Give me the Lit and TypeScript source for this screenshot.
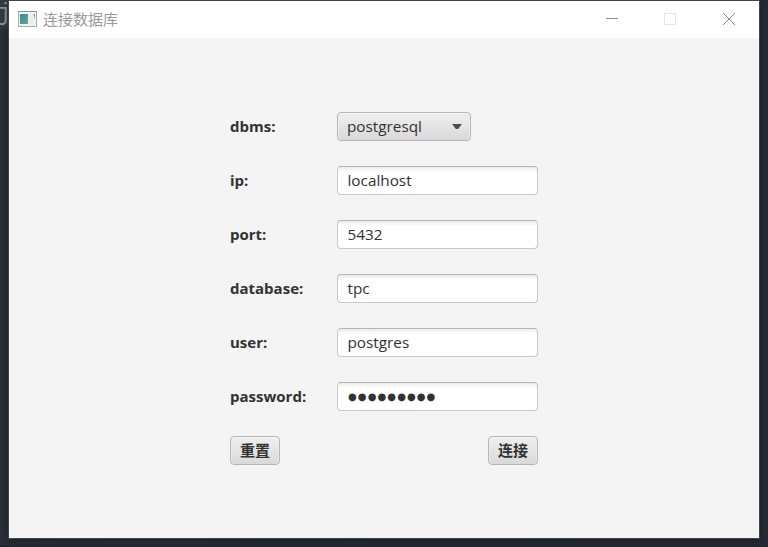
import { LitElement, html, css } from "lit";
import { customElement, property } from "lit/decorators.js";

@customElement("title-bar")
class TitleBar extends LitElement {
  static styles = css`
    :host { display: flex; align-items: center; height: 37px; background: #fff; }
    svg { display: block; flex: none; }
    .app-icon { margin: 0 0 2px 9px; }
    .title {
      flex: 1; margin: 0 0 2px 6px; color: #999;
      font: 15px/22px "Noto Sans CJK SC", sans-serif;
    }
    .controls { display: flex; }
  `;
  render() {
    return html`
      <svg class="app-icon" width="19" height="16" viewBox="0 0 19 16">
        <defs>
          <linearGradient id="pane" x1="0" y1="0" x2="1" y2="1">
            <stop offset="0" stop-color="#3f7fa0" /><stop offset="1" stop-color="#5fb184" />
          </linearGradient>
        </defs>
        <rect x=".5" y=".5" width="18" height="15" fill="#f1f4f4" stroke="#a5abb0" />
        <path d="M0 .5H19" stroke="#8c959d" />
        <rect x="2" y="3" width="8" height="10" fill="url(#pane)" />
        <rect x="11" y="3" width="4" height="10" fill="#e9edec" />
        <path d="M15.6 3h1.4v6z" fill="#4d9c91" />
      </svg>
      <span class="title">连接数据库</span>
      <div class="controls">
        <svg width="58" height="37" viewBox="0 0 58 37"><path d="M23 17.5H35" stroke="#909090" /></svg>
        <svg width="58" height="37" viewBox="0 0 58 37"><rect x="23.5" y="12.5" width="11" height="11" fill="none" stroke="#e6e6e6" /></svg>
        <svg width="60" height="37" viewBox="0 0 60 37"><path d="M24 12L36 24M36 12L24 24" stroke="#858585" stroke-width="1" /></svg>
      </div>
    `;
  }
}

@customElement("form-field")
class FormField extends LitElement {
  @property() label = "";
  @property() value = "";
  @property() kind = "text";
  static styles = css`
    :host { display: flex; height: 29px; align-items: center; color: #323232; font: 15px/29px "Open Sans", "Noto Sans", sans-serif; }
    .label { width: 107px; flex: none; font-weight: 700; white-space: nowrap; }
    .box {
      box-sizing: border-box; width: 201px; height: 29px; padding: 0 9.5px; line-height: 27px;
      border: 1px solid #c8c8c8; border-top-color: #b5b5b5; border-radius: 4px;
      background: linear-gradient(#ececec, #fff 5px); white-space: nowrap; font-size: 15.3px;
    }
    .select {
      display: flex; align-items: center; justify-content: space-between; width: 134px; padding: 0 8px 0 9px;
      border-color: #b5b5b5; background: linear-gradient(#efefef, #d9d9d9); box-shadow: inset 0 1px #f8f8f8, inset 1px 0 #ececec, inset -1px 0 #ececec;
    }
    .password { padding-left: 10px; font-family: "DejaVu Sans", sans-serif; font-size: 10px; letter-spacing: 1.1px; }
  `;
  render() {
    return html`
      <span class="label">${this.label}</span>
      <div class="box ${this.kind}">
        <span>${this.value}</span>
        ${this.kind === "select"
          ? html`<svg width="11" height="7" viewBox="0 0 11 7"><path d="M1 2H11L6 7.5Z" fill="#f4f4f4" /><path d="M1 1H11L7.2 6H4.8Z" fill="#4c4c4c" /></svg>`
          : null}
      </div>
    `;
  }
}

@customElement("app-root")
class AppRoot extends LitElement {
  static styles = css`
    :host {
      display: block; box-sizing: border-box; height: 547px; padding: 0 8px; overflow: hidden;
      background: linear-gradient(transparent 545px, #252431 545px), linear-gradient(90deg, #292e37, #272b37);
      position: relative;
    }
    .behind { position: absolute; left: 0; top: 0; height: 29px; width: 8px; background: #353942; color: #8b9198; font: 24px/27px "Liberation Mono", monospace; text-indent: -3px; }
    .window { position: relative; box-sizing: border-box; width: 752px; height: 539px; border: 1px solid #43444c; background: #f4f4f4; box-shadow: 0 2px 7px rgba(0,0,0,.35); }
    .form { display: flex; flex-direction: column; gap: 25px; width: 308px; padding: 74px 0 0 221px; }
    .actions { display: flex; justify-content: space-between; }
    .button {
      box-sizing: border-box; width: 50px; height: 29px; padding: 0 0 2px; text-align: center; color: #323232;
      border: 1px solid #b5b5b5; border-radius: 4px; background: linear-gradient(#efefef, #d9d9d9);
      box-shadow: inset 0 1px #f8f8f8, inset 1px 0 #ececec, inset -1px 0 #ececec;
      font: 700 15px/25px "Noto Sans CJK SC", sans-serif;
    }
  `;
  private fields = [
    ["dbms:", "postgresql", "select"],
    ["ip:", "localhost", "text"],
    ["port:", "5432", "text"],
    ["database:", "tpc", "text"],
    ["user:", "postgres", "text"],
    ["password:", "●●●●●●●●●", "password"],
  ];
  render() {
    return html`
      <div class="behind">j</div>
      <div class="window">
        <title-bar></title-bar>
        <div class="form">
          ${this.fields.map(([label, value, kind]) => html`<form-field .label=${label} .value=${value} .kind=${kind}></form-field>`)}
          <div class="actions">
            <button class="button">重置</button>
            <button class="button">连接</button>
          </div>
        </div>
      </div>
    `;
  }
}
